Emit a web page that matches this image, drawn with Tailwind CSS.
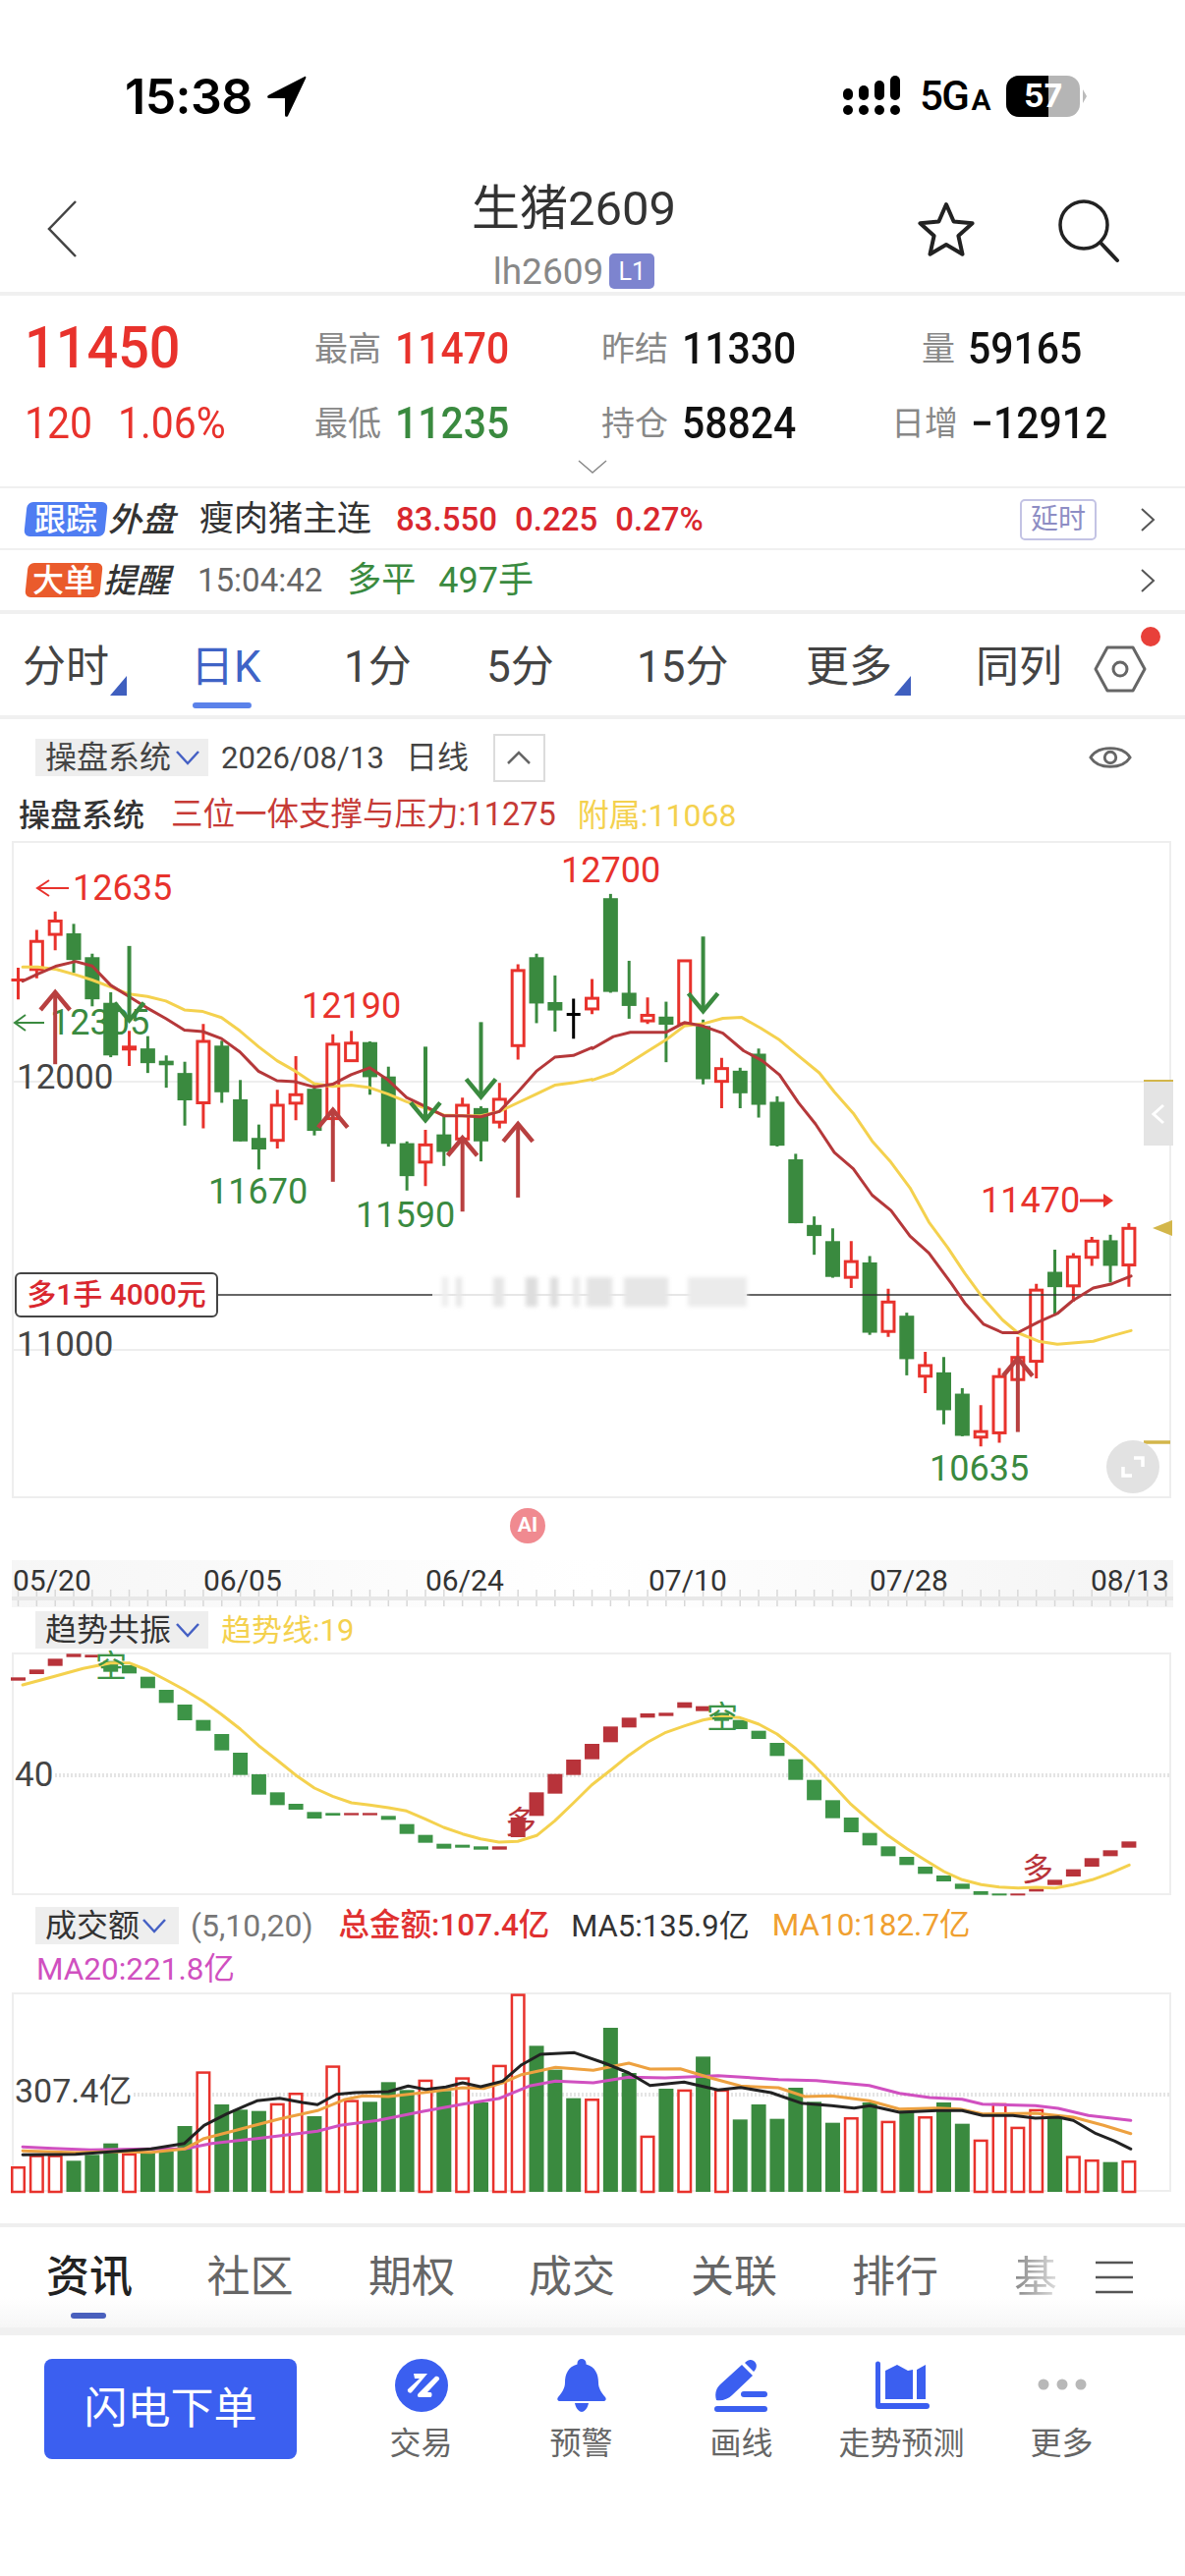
<!doctype html>
<html lang="zh">
<head>
<meta charset="utf-8">
<script src="https://cdn.jsdelivr.net/npm/@tailwindcss/browser@4"></script>
</head>
<body class="bg-white">
<div class="w-[1206px] h-[2622px] overflow-hidden bg-white text-[#333] font-[Roboto,'Noto_Sans_CJK_SC',sans-serif]">

  <!-- status bar -->
  <div class="h-[160px] pt-[36px] pl-[127px] pr-[100px] flex items-center">
    <span class="font-[Inter] font-semibold text-[50px] leading-none text-black tracking-[-0.5px]">15:38</span>
    <svg class="ml-[14px]" width="42" height="44" viewBox="0 0 42 44"><path d="M39 2 2 21c-1.500 1-1 3 1 3h16v17c0 2 2 2.500 3 1L40 4c1-1.500 0-3-1-2z" fill="#000"/></svg>
    <div class="ml-auto flex items-center">
      <svg width="58" height="42" viewBox="0 0 58 42">
        <g fill="#000">
          <rect x="0" y="13" width="10" height="12" rx="5"/><rect x="16" y="10" width="10" height="15" rx="5"/><rect x="32" y="5" width="10" height="20" rx="5"/><rect x="48" y="0" width="10" height="25" rx="5"/>
          <rect x="0" y="30" width="10" height="10" rx="5"/><rect x="16" y="30" width="10" height="10" rx="5"/><rect x="32" y="30" width="10" height="10" rx="5"/><rect x="48" y="30" width="10" height="10" rx="5"/>
        </g>
      </svg>
      <span class="ml-[20px] font-medium text-[42px] leading-none text-black tracking-[-1.500px]">5G<span class="text-[30px] font-semibold ml-[3px]">A</span></span>
      <div class="ml-[17px] relative w-[75px] h-[42px] rounded-[13px] bg-[#b5b5b5] overflow-hidden flex items-center justify-center">
        <div class="absolute left-0 top-0 bottom-0 w-[43px] bg-black"></div>
        <span class="relative font-[Inter] font-bold text-[32px] leading-none text-white">57</span>
      </div>
      <div class="ml-[3px] w-0 h-0 border-y-[7px] border-y-transparent border-l-[4px] border-l-[#bbbbbb]"></div>
    </div>
  </div>

  <!-- nav -->
  <div class="relative h-[141px] border-b-4 border-[#f0f0f0] flex flex-col items-center pr-[38px]">
    <div class="text-[49px] leading-[60px] mt-[23px] text-[#333]">生猪2609</div>
    <div class="flex items-center mt-[15px] h-[36px]">
      <span class="text-[37px] text-[#888] leading-none">lh2609</span>
      <span class="ml-[6px] w-[46px] h-[36px] rounded-[5px] bg-[#7d84cf] text-white text-[25px] flex items-center justify-center leading-none">L1</span>
    </div>
    <svg class="absolute left-[44px] top-[42px]" width="40" height="62" viewBox="0 0 40 62"><path d="M33 3 6 31l27 28" fill="none" stroke="#444" stroke-width="2.500"/></svg>
    <svg class="absolute left-[933px] top-[43px]" width="60" height="62" viewBox="0 0 60 60"><path d="M30 4 37.600 21.500 56.600 23.300 42.400 36 46.500 54.700 30 45 13.500 54.700 17.600 36 3.400 23.300 22.400 21.500Z" fill="none" stroke="#222" stroke-width="4" stroke-linejoin="round"/></svg>
    <svg class="absolute left-[1072px] top-[40px]" width="72" height="70" viewBox="0 0 72 70"><circle cx="31" cy="29" r="24" fill="none" stroke="#222" stroke-width="3.500"/><path d="M48 47 65 65" stroke="#222" stroke-width="4" stroke-linecap="round"/></svg>
  </div>

  <!-- quote -->
  <div class="relative h-[196px] border-b-2 border-[#f0f0f0] pl-[25px] grid grid-cols-[295px_292px_248px_316px] grid-rows-[76px_76px] pt-[16px] items-center text-[44px] leading-none font-medium">
    <div class="text-[60px] text-[#e8322c] leading-none origin-left scale-x-[0.93] mt-[-3px]">11450</div>
    <div class="flex items-center gap-[14px]"><span class="text-[34px] font-normal text-[#888]">最高</span><span class="text-[#e8322c] origin-left scale-x-[0.93]">11470</span></div>
    <div class="flex items-center gap-[14px]"><span class="text-[34px] font-normal text-[#888]">昨结</span><span class="text-[#111] origin-left scale-x-[0.93]">11330</span></div>
    <div class="flex items-center pl-[78px]"><span class="text-[34px] font-normal text-[#888]">量</span><span class="text-[#111] ml-[13px] origin-left scale-x-[0.93]">59165</span></div>
    <div class="flex items-center gap-[28px] text-[#e8322c] origin-left scale-x-[0.93] font-normal"><span>120</span><span>1.06%</span></div>
    <div class="flex items-center gap-[14px]"><span class="text-[34px] font-normal text-[#888]">最低</span><span class="text-[#3a8a3f] origin-left scale-x-[0.93]">11235</span></div>
    <div class="flex items-center gap-[14px]"><span class="text-[34px] font-normal text-[#888]">持仓</span><span class="text-[#111] origin-left scale-x-[0.93]">58824</span></div>
    <div class="flex items-center pl-[47px] gap-[13px]"><span class="text-[34px] font-normal text-[#888]">日增</span><span class="text-[#111] origin-left scale-x-[0.93]">−12912</span></div>
    <svg class="absolute left-[587px] top-[166px]" width="32" height="16" viewBox="0 0 32 16"><path d="M2 2 16 14 30 2" fill="none" stroke="#888" stroke-width="1.500"/></svg>
  </div>

  <!-- rows -->
  <div class="h-[63px] border-b-2 border-[#f0f0f0] flex items-center pl-[26px] pr-[30px] pt-[2px]">
    <span class="w-[82px] h-[35px] rounded-[6px] -skew-x-6 bg-[#4f7df2] text-white text-[32px] font-medium flex items-center justify-center leading-none"><span class="skew-x-6">跟踪</span></span>
    <span class="ml-[2px] text-[34px] italic font-medium text-[#333] leading-none">外盘</span>
    <span class="ml-[25px] text-[35px] text-[#333] leading-none">瘦肉猪主连</span>
    <span class="ml-[25px] text-[33px] font-medium text-[#d9272e] leading-none">83.550</span>
    <span class="ml-[18px] text-[33px] font-medium text-[#d9272e] leading-none">0.225</span>
    <span class="ml-[18px] text-[33px] font-medium text-[#d9272e] leading-none">0.27%</span>
    <span class="ml-auto w-[78px] h-[42px] border-2 border-[#c3c3e4] rounded-[5px] text-[28px] text-[#8d8dc4] flex items-center justify-center leading-none">延时</span>
    <svg class="ml-[44px]" width="16" height="24" viewBox="0 0 16 24"><path d="M2 1 14 12 2 23" fill="none" stroke="#555" stroke-width="2"/></svg>
  </div>
  <div class="h-[65px] border-b-4 border-[#f0f0f0] flex items-center pl-[27px] pr-[30px]">
    <span class="w-[76px] h-[35px] rounded-[6px] -skew-x-6 bg-[#ea5b2c] text-white text-[32px] font-medium flex items-center justify-center leading-none"><span class="skew-x-6">大单</span></span>
    <span class="ml-[2px] text-[34px] italic font-medium text-[#333] leading-none">提醒</span>
    <span class="ml-[28px] text-[33px] text-[#666] leading-none">15:04:42</span>
    <span class="ml-[25px] text-[35px] text-[#3a8a3f] leading-none">多平</span>
    <span class="ml-[23px] text-[36px] text-[#3a8a3f] leading-none">497手</span>
    <svg class="ml-auto" width="16" height="24" viewBox="0 0 16 24"><path d="M2 1 14 12 2 23" fill="none" stroke="#555" stroke-width="2"/></svg>
  </div>

  <!-- period tabs -->
  <div class="relative h-[107px] border-b-4 border-[#f0f0f0] pl-[23px] flex items-center text-[44px] text-[#444] leading-none pt-[4px]">
    <span class="w-[171px] relative">分时<span class="absolute left-[89px] bottom-[-7px] w-0 h-0 border-l-[17px] border-l-transparent border-b-[20px] border-b-[#3f5fbf]"></span></span>
    <span class="w-[156px] text-[#3f63c6] relative">日K<span class="absolute left-[2px] bottom-[-20px] w-[60px] h-[6px] rounded-full bg-[#5b82ea]"></span></span>
    <span class="w-[145px]">1分</span>
    <span class="w-[153px]">5分</span>
    <span class="w-[172px]">15分</span>
    <span class="w-[173px] relative">更多<span class="absolute left-[90px] bottom-[-7px] w-0 h-0 border-l-[17px] border-l-transparent border-b-[20px] border-b-[#3f5fbf]"></span></span>
    <span class="w-[121px]">同列</span>
    <svg width="64" height="60" viewBox="0 0 64 60" class="ml-[-3px] mt-[-4px]"><path d="M4 34 16 12h26l12 22-12 22H16z" fill="none" stroke="#666" stroke-width="3" stroke-linejoin="round"/><circle cx="29" cy="34" r="7" fill="none" stroke="#666" stroke-width="3"/></svg>
    <span class="absolute left-[1161px] top-[13px] w-[20px] h-[20px] rounded-full bg-[#e8403a]"></span>
  </div>

  <!-- chart toolbar -->
  <div class="h-[68px] pt-[10px] pl-[36px] pr-[54px] flex items-center text-[32px] leading-none text-[#444]">
    <span class="w-[176px] h-[38px] bg-[#eeeeee] pl-[10px] flex items-center">操盘系统<svg class="ml-[4px]" width="26" height="18" viewBox="0 0 26 18"><path d="M2 3 13 15 24 3" fill="none" stroke="#4560c4" stroke-width="2.500"/></svg></span>
    <span class="ml-[13px] text-[31px] tracking-[0.1px]">2026/08/13</span>
    <span class="ml-[22px]">日线</span>
    <span class="ml-[25px] w-[53px] h-[49px] border-2 border-[#dcdcdc] flex items-center justify-center"><svg width="26" height="16" viewBox="0 0 26 16"><path d="M2 14 13 3 24 14" fill="none" stroke="#666" stroke-width="2.500"/></svg></span>
    <svg class="ml-auto" width="44" height="32" viewBox="0 0 46 32"><path d="M2 16C10 3 36 3 44 16 36 29 10 29 2 16Z" fill="none" stroke="#666" stroke-width="3"/><circle cx="23" cy="16" r="6" fill="none" stroke="#666" stroke-width="3"/></svg>
  </div>
  <div class="h-[56px] pl-[19px] pt-[3px] flex items-center text-[32px] leading-none">
    <span class="text-[#333] font-medium">操盘系统</span>
    <span class="ml-[27px] text-[#c63a36] text-[32.500px]">三位一体支撑与压力:11275</span>
    <span class="ml-[22px] text-[#f4d14e]">附属:11068</span>
  </div>

  <!-- main chart -->
  <div class="relative ml-[12px] w-[1180px] h-[669px] border-2 border-[#eeeeee]">
    <svg id="main" class="absolute left-[-2px] top-[-2px] overflow-visible" width="1180" height="669" viewBox="12 856 1180 669"></svg>
    <div class="absolute left-[426px] top-[442px] w-[320px] h-[30px] bg-white">
      <div class="absolute left-0 right-0 top-[17px] h-[2px] bg-[#e6e6e6]"></div>
      <div class="absolute inset-0 flex items-stretch blur-[2px]">
        <span class="ml-[10px] w-[6px] bg-[#ececec]"></span><span class="ml-[8px] w-[6px] bg-[#e6e6e6]"></span>
        <span class="ml-[32px] w-[11px] bg-[#e6e6e6]"></span><span class="ml-[22px] w-[12px] bg-[#dddddd]"></span>
        <span class="ml-[13px] w-[8px] bg-[#dddddd]"></span><span class="ml-[15px] w-[7px] bg-[#e8e8e8]"></span>
        <span class="ml-[7px] w-[26px] bg-[#e4e4e4]"></span><span class="ml-[12px] w-[45px] bg-[#e6e6e6]"></span>
        <span class="ml-[20px] w-[60px] bg-[#ebebeb]"></span>
      </div>
    </div>
    <div class="absolute left-[1px] top-[437px] w-[207px] h-[46px] bg-white border-2 border-[#444] rounded-[6px] text-[#d9272e] text-[30px] font-medium flex items-center justify-center leading-none">多1手 4000元</div>
    <div class="absolute left-[1150px] top-[241px] w-[30px] h-[67px] bg-[#e4e4e4] border-t-2 border-[#d3b64a] flex items-center justify-center"><svg width="16" height="24" viewBox="0 0 16 24"><path d="M13 3 3 12 13 21" fill="none" stroke="#fff" stroke-width="3"/></svg></div>
    <div class="absolute left-[1112px] top-[608px] w-[54px] h-[54px] rounded-full bg-[#e2e2e2] flex items-center justify-center"><svg width="30" height="30" viewBox="0 0 30 30"><path d="M16 6h9v9M14 24H5v-9" fill="none" stroke="#fff" stroke-width="3.500"/></svg></div>
  </div>

  <div class="h-[63px] pl-[519px] pb-[8px] flex items-center">
    <span class="w-[36px] h-[36px] rounded-full bg-[#f08a90] text-white text-[21px] font-bold flex items-center justify-center leading-none">AI</span>
  </div>

  <!-- time axis -->
  <div class="relative ml-[12px] w-[1182px] h-[48px] bg-gradient-to-r from-[#f6f6f6] via-white to-[#f4f4f4]">
    <svg id="ticks" class="absolute left-0 top-0" width="1182" height="48" viewBox="12 1588 1182 48"></svg>
    <div class="relative flex pl-[1px] pt-[5px] text-[30px] leading-[32px] text-[#333]">
      <span class="w-[194px]">05/20</span><span class="w-[226px]">06/05</span><span class="w-[227px]">06/24</span><span class="w-[225px]">07/10</span><span class="w-[225px]">07/28</span><span>08/13</span>
    </div>
  </div>

  <!-- trend header -->
  <div class="h-[46px] pl-[36px] flex items-center text-[32px] leading-none">
    <span class="w-[176px] h-[38px] bg-[#eeeeee] pl-[10px] flex items-center text-[#333]">趋势共振<svg class="ml-[4px]" width="26" height="18" viewBox="0 0 26 18"><path d="M2 3 13 15 24 3" fill="none" stroke="#4560c4" stroke-width="2.500"/></svg></span>
    <span class="ml-[13px] text-[#f4d14e] text-[31px]">趋势线:19</span>
  </div>
  <div class="relative ml-[12px] w-[1180px] h-[247px] border-2 border-[#eeeeee]">
    <svg id="trend" class="absolute left-[-2px] top-[-2px] overflow-visible" width="1180" height="247" viewBox="12 1682 1180 247"></svg>
  </div>

  <!-- volume header -->
  <div class="h-[99px] pl-[36px] flex flex-col text-[32px] leading-none">
    <div class="mt-[12px] h-[38px] flex items-center">
      <span class="w-[146px] h-[38px] bg-[#eeeeee] pl-[10px] flex items-center text-[#333]">成交额<svg class="ml-[2px]" width="26" height="18" viewBox="0 0 26 18"><path d="M2 3 13 15 24 3" fill="none" stroke="#4560c4" stroke-width="2.500"/></svg></span>
      <span class="ml-[12px] text-[#777] text-[32px]">(5,10,20)</span>
      <span class="ml-[26px] text-[#e03030] font-medium text-[31.500px]">总金额:107.4亿</span>
      <span class="ml-[22px] text-[#333] text-[31px]">MA5:135.9亿</span>
      <span class="ml-[23px] text-[#f0a030] text-[31.500px]">MA10:182.7亿</span>
    </div>
    <div class="mt-[10px] text-[#d050c0] text-[31.500px] pl-[1px]">MA20:221.8亿</div>
  </div>
  <div class="relative ml-[12px] w-[1180px] h-[203px] border-2 border-[#eeeeee]">
    <svg id="vol" class="absolute left-[-2px] top-[-2px] overflow-visible" width="1180" height="203" viewBox="12 2028 1180 203"></svg>
  </div>

  <!-- bottom tabs -->
  <div class="mt-[32px] h-[114px] border-t-4 border-[#efefef] border-b-8 border-b-[#f0f0f0] bg-gradient-to-b from-white from-70% to-[#f6f6f6] relative flex items-center pl-[47px] text-[44px] text-[#666] leading-none">
    <span class="w-[163.500px] text-[#222] font-medium relative">资讯<span class="absolute left-[25px] top-[58px] w-[36px] h-[6px] rounded-full bg-[#4a60bd]"></span></span>
    <span class="w-[164.500px]">社区</span><span class="w-[163px]">期权</span><span class="w-[165px]">成交</span><span class="w-[164px]">关联</span><span class="w-[165px]">排行</span>
    <span class="text-transparent bg-clip-text bg-gradient-to-r from-[#888] to-[#dddddd]">基</span>
    <svg class="absolute left-[1115px] top-[33px]" width="38" height="36" viewBox="0 0 38 36"><path d="M0 3h38M0 18h38M0 33h38" stroke="#555" stroke-width="2.500"/></svg>
  </div>

  <!-- action bar -->
  <div class="relative h-[150px] flex items-start pl-[45px] pt-[24px]">
    <span class="w-[257px] h-[102px] rounded-[8px] bg-[#3b5ff0] text-white text-[44px] flex items-center justify-center leading-none">闪电下单</span>
    <div class="ml-[45px] -mt-[1px] flex text-[32px] text-[#666] leading-none">
      <div class="w-[163px] flex flex-col items-center gap-[15px]">
        <svg width="56" height="56" viewBox="0 0 56 56"><circle cx="28" cy="28" r="27" fill="#3b5ff0"/><path d="M20 16H34L18 35C16 37 13 34 14 32L26 21H21Z" fill="#fff"/><path d="M42 19C44 18 47 20 46 22L34 35H37C39 35 39 40 37 40H26C24 40 23 38 25 36Z" fill="#fff"/></svg>
        <span>交易</span>
      </div>
      <div class="w-[163px] flex flex-col items-center gap-[15px]">
        <svg width="56" height="56" viewBox="0 0 56 56"><path d="M28 1a4.500 4.500 0 0 1 4.500 4.500v1C42 9 45 17 45 25c0 6 3 10 7 15 1.500 2 .5 4-2 4H6c-2.500 0-3.500-2-2-4 4-5 7-9 7-15 0-8 3-16 12.500-18.500v-1A4.500 4.500 0 0 1 28 1z" fill="#3b5ff0"/><path d="M21 46h14c-1 6-5 9-7 9s-6-3-7-9z" fill="#3b5ff0"/></svg>
        <span>预警</span>
      </div>
      <div class="w-[163px] flex flex-col items-center gap-[15px]">
        <svg width="56" height="56" viewBox="0 0 56 56"><path d="M2 43c-2-7 0-12 4-16L28 7l11 11-21 20c-4 4-10 6-16 5z" fill="#3b5ff0"/><path d="M31 5c3-3 6-4 9-2s4 6 1 10l-1 1z" fill="#3b5ff0"/><rect x="27" y="34" width="27" height="6" rx="3" fill="#3b5ff0"/><rect x="0" y="49" width="54" height="6" rx="3" fill="#3b5ff0"/></svg>
        <span>画线</span>
      </div>
      <div class="w-[163px] flex flex-col items-center gap-[15px]">
        <svg width="56" height="56" viewBox="0 0 56 56"><path d="M1 6a2.500 2.500 0 0 1 5 0v40h47a3 3 0 0 1 0 6H4a3 3 0 0 1-3-3z" fill="#3b5ff0"/><path d="M11 13 23 7 34 13 39 12V42H11zM43 12 52 7V42H43z" fill="#3b5ff0"/></svg>
        <span class="whitespace-nowrap">走势预测</span>
      </div>
      <div class="w-[163px] flex flex-col items-center gap-[15px]">
        <svg width="56" height="56" viewBox="0 0 56 56"><circle cx="9" cy="27" r="5.500" fill="#b8b8b8"/><circle cx="28" cy="27" r="5.500" fill="#b8b8b8"/><circle cx="47" cy="27" r="5.500" fill="#b8b8b8"/></svg>
        <span>更多</span>
      </div>
    </div>
  </div>
</div>

<script>
const R='#e8322c',G='#3a8a3f',X=i=>18.5+18.84*i;
const Y3=y=>760+y/2.8,X3=x=>x/2.6,Y4=y=>860+y/2.306,X4=x=>603+x/2.6,X5=x=>x/1.3,Y5=y=>1560+y/3,Y6=y=>1930+y/3;
const c3=[['r',630,662,668,720],['r',522,555,635,660],['r',470,497,535,580],['g',505,532,608,645],['g',590,600,720,740],['g',700,730,880,885],['d',810,852,866,910],['g',825,860,902,930],['g',880,895,908,972],['g',898,930,1008,1080],['r',790,840,1015,1088],['g',838,852,985,1015],['g',950,1005,1125,1125],['g',1077,1115,1148,1205],['r',978,1022,1122,1145],['r',882,992,1016,1065],['g',958,975,1095,1108],['r',820,848,1060,1080],['r',810,845,895,895],['g',840,842,942,992],['g',912,940,1132,1140],['g',1125,1130,1224,1265],['r',1092,1135,1184,1252],['g',1050,1105,1155,1195],['r',1000,1022,1118,1150],['g',1025,1030,1125,1182],['r',958,1005,1070,1088],['r',620,638,852,892],['g',590,600,732,788],['g',652,728,752,812],['k',718,760,764,832]];
const c4=[['r',315,360,385,397],['g',115,125,345,347],['g',272,347,378,408],['r',358,400,413,420],['g',368,403,422,510],['r',272,272,420,420],['g',410,425,550,562],['r',500,525,555,618],['g',523,530,583,618],['g',478,490,610,640],['g',590,603,706,708],['g',725,738,888,888],['g',872,892,918,962],['g',900,930,1014,1016],['r',930,978,1015,1040],['g',965,980,1145,1150],['r',1042,1073,1142,1155],['g',1098,1105,1207,1245],['r',1190,1222,1247,1287],['g',1202,1238,1327,1360],['g',1275,1288,1387,1388],['r',1315,1377,1390,1412],['r',1228,1248,1380,1403],['r',1155,1203,1255,1256],['r',1030,1045,1212,1252],['g',950,1002,1038,1105],['r',958,967,1035,1072],['r',920,930,968,988],['g',915,928,988,1027],['r',888,900,986,1037]];
const maR3=[[60,668],[100,648],[150,625],[200,612],[244,625],[293,680],[341,712],[390,745],[439,775],[488,808],[537,812],[586,832],[635,870],[684,925],[733,952],[782,955],[831,970],[880,962],[929,935],[978,915],[1027,950],[1076,1000],[1125,1025],[1174,1052],[1223,1052],[1272,1055],[1321,1040],[1370,985],[1419,925],[1468,885],[1517,880],[1566,858]];
const maR4=[[0,478],[55,450],[100,440],[194,440],[243,417],[292,425],[345,442],[400,483],[450,507],[495,540],[545,605],[590,655],[640,722],[690,760],[740,822],[790,858],[840,918],[890,958],[950,1030],[985,1075],[1035,1125],[1085,1145],[1125,1145],[1180,1120],[1230,1100],[1270,1070],[1325,1040],[1375,1030],[1425,1012]];
const maY3=[[60,628],[100,628],[150,635],[200,650],[244,665],[293,685],[341,705],[390,712],[439,725],[488,750],[537,755],[586,772],[635,810],[684,855],[733,895],[782,925],[831,960],[880,968],[929,965],[978,972],[1027,990],[1076,1012],[1125,1030],[1174,1050],[1223,1052],[1272,1052],[1321,1040],[1370,1015],[1419,990],[1468,965],[1517,958],[1566,948]];
const maY4=[[0,552],[55,535],[100,510],[145,485],[194,458],[243,425],[292,420],[345,407],[395,405],[445,430],[495,458],[545,495],[600,535],[640,580],[690,630],[740,695],[790,745],[840,805],[890,885],[940,945],[985,1005],[1030,1060],[1085,1115],[1125,1145],[1180,1165],[1230,1172],[1325,1165],[1375,1152],[1425,1140]];
const pl=(pts,col,w)=>`<polyline points="${pts.map(p=>p.map(v=>v.toFixed(1)).join(',')).join(' ')}" fill="none" stroke="${col}" stroke-width="${w}" stroke-linejoin="round" stroke-linecap="round"/>`;
const T=(x,y,s,f,size=36,extra='')=>`<text x="${x}" y="${y}" fill="${f}" font-size="${size}" dominant-baseline="central" ${extra}>${s}</text>`;
const candle=(i,[t,h,a,b,l],Y)=>{const x=X(i),yh=Y(h),ya=Y(a),yb=Y(b),yl=Y(l);
  if(t==='g')return `<path d="M${x} ${yh}V${yl}" stroke="${G}" stroke-width="3"/><rect x="${x-7.5}" y="${ya}" width="15" height="${yb-ya}" fill="${G}"/>`;
  if(t==='k')return `<path d="M${x} ${yh}V${yl}M${x-7} ${ya+1}H${x+7}" stroke="#000" stroke-width="3"/>`;
  if(t==='d')return `<path d="M${x} ${yh}V${yl}" stroke="${R}" stroke-width="3"/><rect x="${x-7.5}" y="${ya}" width="15" height="${yb-ya}" fill="${R}"/>`;
  if(b-a<8&&i===0)return `<path d="M${x} ${yh}V${yl}M${x-7} ${ya+1}H${x+7}" stroke="${R}" stroke-width="3"/>`;
  return `<path d="M${x} ${yh}V${ya}M${x} ${yb}V${yl}" stroke="${R}" stroke-width="3"/><rect x="${x-6}" y="${ya}" width="12" height="${yb-ya}" fill="#fff" stroke="${R}" stroke-width="3"/>`;};
const up=(x,t,b)=>`<path d="M${x} ${t}V${b}" stroke="#b84040" stroke-width="4"/><path d="M${x-15} ${t+18}L${x} ${t}L${x+15} ${t+18}" fill="none" stroke="#b84040" stroke-width="4.500"/>`;
const dn=(x,t,b)=>`<path d="M${x} ${t}V${b}" stroke="${G}" stroke-width="4"/><path d="M${x-15} ${b-18}L${x} ${b}L${x+15} ${b-18}" fill="none" stroke="${G}" stroke-width="4.500"/>`;
let s='';
s+=`<path d="M12 1101H1192M12 1374H1192" stroke="#eeeeee" stroke-width="2"/>`;
s+=T(17,1096,'12000','#444',35)+T(17,1368,'11000','#444',35);
s+=T(51,1041,'12305',G)+`<path d="M45 1041H16M26 1033 15 1041 26 1049" fill="none" stroke="${G}" stroke-width="2"/>`;
c3.forEach((d,i)=>s+=candle(i,d,Y3));
c4.forEach((d,i)=>s+=candle(i+31,d,Y4));
s+=`<path d="M222 1318H1192" stroke="#333" stroke-width="1.500"/>`;
s+=pl([...maY3.map(([x,y])=>[X3(x),Y3(y)]),...maY4.map(([x,y])=>[X4(x),Y4(y)])],'#f4d14e',3);
s+=pl([...maR3.map(([x,y])=>[X3(x),Y3(y)]),...maR4.map(([x,y])=>[X4(x),Y4(y)])],'#b5383a',3);
s+=up(X(2),Y3(700),Y3(905))+up(X(17),Y3(1035),Y3(1240))+up(X(24),Y3(1115),Y3(1325))+up(X(27),Y3(1075),Y3(1285))+up(X(54),Y4(1205),Y4(1378));
s+=dn(X(6),Y3(568),Y3(780))+dn(X(22),Y3(855),Y3(1065))+dn(X(25),Y3(785),Y3(998))+dn(X(37),Y4(215),Y4(390));
s+=`<path d="M70 904H39M50 896 38 904 50 912" fill="none" stroke="${R}" stroke-width="2"/>`;
s+=T(74,904,'12635',R)+T(307,1024,'12190',R)+T(571,886,'12700',R)+T(998,1222,'11470',R)+T(212,1213,'11670',G)+T(362,1237,'11590',G)+T(946,1495,'10635',G);
s+=`<path d="M1099 1222H1125" stroke="${R}" stroke-width="3"/><path d="M1123 1215 1133 1222 1123 1229Z" fill="${R}"/>`;
s+=`<path d="M1173 1250 1193 1242V1258Z" fill="#d3b64a"/><path d="M1164 1468H1191" stroke="#d3b64a" stroke-width="3.500"/>`;
document.getElementById('main').innerHTML=s;

let tk='';for(let i=0;i<63;i++){tk+=`<path d="M${X(i)} 1618V1635" stroke="#d8d8d8" stroke-width="1.500"/>`;}
tk+=`<path d="M12 1627H1194" stroke="#e8e8e8" stroke-width="4"/>`;
document.getElementById('ticks').innerHTML=tk;

const blocks=[['r',442,452],['r',418,432],['r',385,407],['r',370,380],['r',373,381],['g',392,425],['g',405,430],['g',440,475],['g',480,520],['g',525,573],['g',572,605],['g',615,665],['g',672,740],['g',738,800],['g',793,832],['g',828,846],['g',853,873],['g',856,864],['r',856,863],['r',856,863],['g',865,877],['g',890,920],['g',923,947],['g',950,965],['g',953,962],['g',958,968],['r',958,968],['r',870,930],['r',793,865],['r',737,797],['r',693,740],['r',645,692],['r',592,640],['r',565,595],['r',552,565],['r',550,560],['r',518,535],['r',530,545],['g',550,575],['g',572,600],['g',605,630],['g',642,682],['g',692,755],['g',755,817],['g',817,872],['g',870,915],['g',917,955],['g',958,988],['g',990,1015],['g',1020,1042],['g',1047,1065],['g',1072,1088],['g',1095,1106],['g',1102,1108],['r',1102,1108],['r',1087,1096],['r',1060,1076],['r',1028,1050],['r',994,1020],['r',970,988],['r',943,962]];
const ty=[[30,465],[70,440],[110,415],[146,398],[171,398],[195,420],[220,450],[244,480],[269,515],[293,555],[318,600],[342,650],[367,695],[391,740],[416,780],[440,805],[465,825],[489,832],[514,840],[538,850],[563,875],[587,900],[612,920],[636,935],[660,945],[685,943],[710,925],[734,880],[759,825],[783,770],[808,725],[832,680],[857,640],[881,610],[906,590],[930,572],[955,562],[979,565],[1004,585],[1028,615],[1053,660],[1077,710],[1102,770],[1126,830],[1151,880],[1175,925],[1200,965],[1224,1000],[1249,1035],[1273,1060],[1298,1075],[1322,1082],[1347,1085],[1371,1083],[1396,1085],[1420,1075],[1445,1060],[1469,1040],[1494,1015]];
let t=`<path d="M56 1807H1190" stroke="#e4e4e4" stroke-width="4" stroke-dasharray="2 2"/>`+T(15,1806,'40','#444',35);
blocks.forEach(([k,a,b],i)=>{t+=`<rect x="${X(i)-7.5}" y="${Y5(a)}" width="15" height="${(b-a)/3}" fill="${k==='g'?'#3d9447':'#b8333a'}"/>`;});
t+=pl(ty.map(([x,y])=>[X5(x),Y5(y)]),'#f4d14e',3);
t+=T(97,1696,'空','#3d9447',32)+T(719,1748,'空','#3d9447',32)+T(514,1855,'多','#b8333a',32)+T(1040,1903,'多','#b8333a',32);
document.getElementById('trend').innerHTML=t;

const vb=[['r',825],['r',790],['r',790],['g',808],['g',790],['g',755],['r',785],['g',780],['g',780],['g',702],['r',535],['g',636],['g',652],['g',656],['r',632],['r',600],['g',672],['r',517],['r',622],['g',628],['g',568],['g',592],['r',560],['g',595],['r',553],['g',630],['r',515],['r',298],['g',457],['g',530],['g',617],['r',618],['g',402],['g',540],['r',731],['g',588],['r',590],['g',490],['r',590],['g',682],['g',636],['g',680],['g',585],['g',628],['g',692],['r',675],['g',630],['r',686],['g',655],['r',672],['g',630],['g',695],['r',743],['r',632],['r',704],['r',650],['g',672],['r',793],['r',804],['g',812],['r',807]];
const mk=[[30,790],[100,788],[150,780],[200,772],[244,755],[270,700],[300,665],[340,625],[370,617],[400,630],[420,637],[445,605],[470,600],[514,597],[540,580],[563,590],[590,583],[612,570],[636,582],[665,565],[690,515],[715,483],[760,478],[800,510],[832,540],[860,578],[905,568],[950,592],[980,584],[1020,600],[1060,632],[1100,640],[1130,647],[1151,640],[1190,660],[1240,655],[1273,655],[1300,670],[1340,670],[1370,678],[1400,675],[1420,685],[1450,725],[1475,748],[1496,772]];
const mo=[[30,778],[100,783],[150,780],[200,782],[244,772],[270,740],[320,710],[370,680],[420,655],[455,622],[480,610],[514,612],[560,600],[612,585],[640,587],[665,570],[690,545],[735,523],[785,532],[832,510],[860,528],[900,527],[940,555],[980,580],[1030,585],[1065,612],[1100,610],[1150,625],[1190,650],[1240,647],[1270,650],[1300,665],[1370,663],[1420,675],[1460,700],[1496,725]];
const mp=[[30,766],[70,770],[120,775],[200,772],[244,772],[280,755],[340,740],[420,718],[450,700],[500,685],[560,657],[612,635],[660,618],[700,580],[735,565],[785,570],[832,553],[880,555],[950,548],[1030,560],[1080,563],[1150,578],[1190,602],[1230,615],[1273,620],[1300,635],[1370,640],[1400,648],[1440,670],[1496,685]];
let v=`<path d="M136 2132H1190" stroke="#e4e4e4" stroke-width="4" stroke-dasharray="2 2"/>`;
vb.forEach(([k,y],i)=>{const x=X(i),yy=Y6(y);v+=k==='g'?`<rect x="${x-7.5}" y="${yy}" width="15" height="${2231-yy}" fill="${G}"/>`:`<rect x="${x-6.25}" y="${yy+1.25}" width="12.5" height="${2231-yy-1.25}" fill="#fff" stroke="${R}" stroke-width="2.500"/>`;});
v+=pl(mp.map(([x,y])=>[X5(x),Y6(y)]),'#d050c0',3)+pl(mo.map(([x,y])=>[X5(x),Y6(y)]),'#eda140',3)+pl(mk.map(([x,y])=>[X5(x),Y6(y)]),'#222',3);
v+=T(15,2128,'307.4亿','#444',34);
document.getElementById('vol').innerHTML=v;
</script>
</body>
</html>
